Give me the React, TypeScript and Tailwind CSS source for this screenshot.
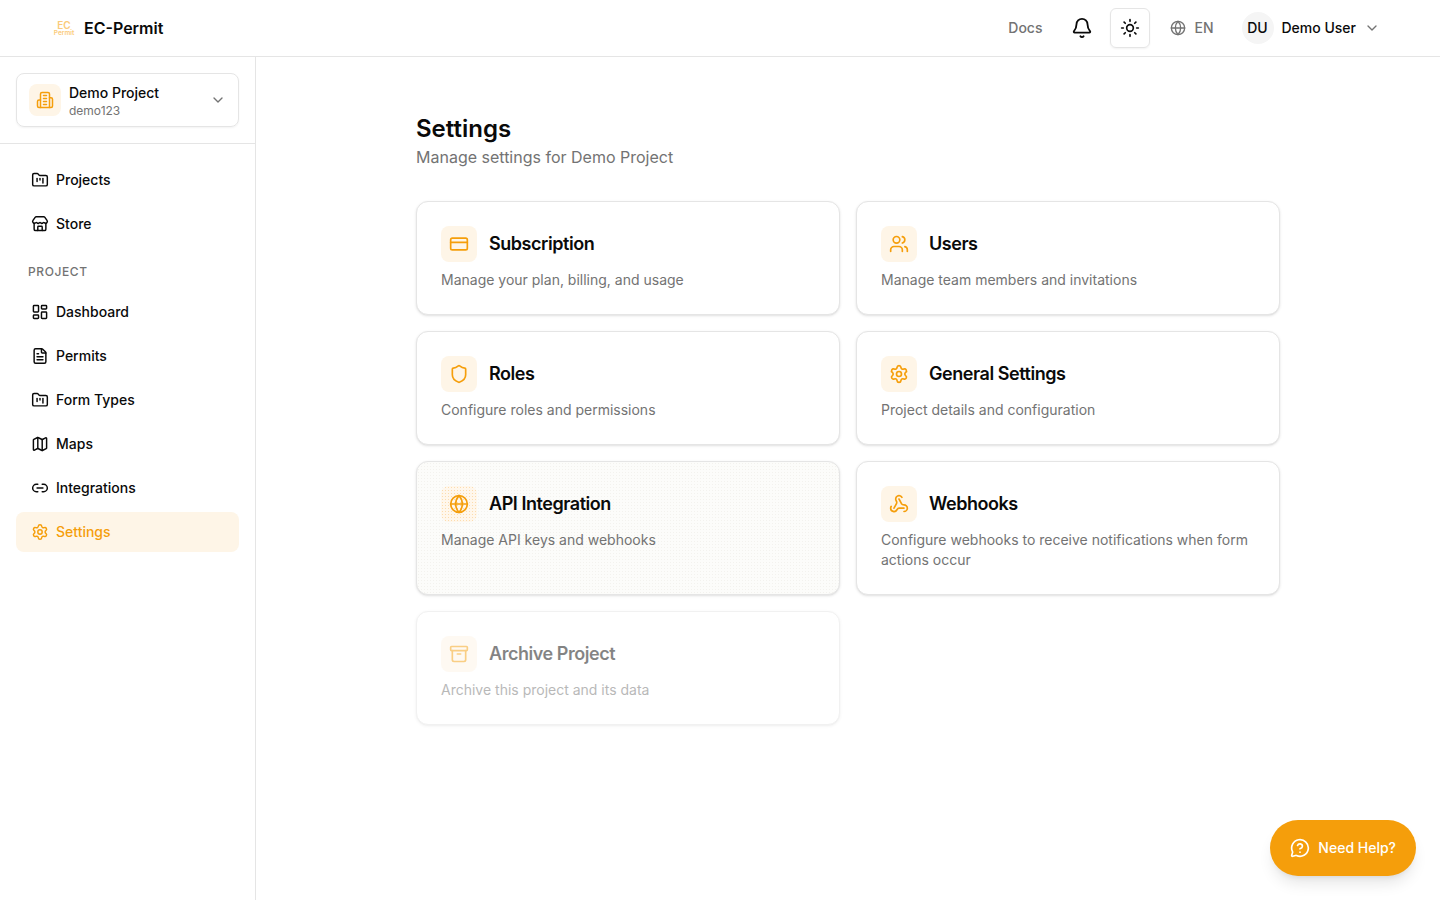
import {
  Archive,
  Bell,
  ChevronDown,
  CreditCard,
  FileText,
  FolderKanban,
  Globe,
  LayoutDashboard,
  Link2,
  Map,
  MessageCircleQuestion,
  Settings,
  Shield,
  Store,
  Sun,
  Users,
  Webhook,
} from 'lucide-react';

const topNav = [
  { label: 'Projects', icon: FolderKanban },
  { label: 'Store', icon: Store },
];

const projectNav = [
  { label: 'Dashboard', icon: LayoutDashboard },
  { label: 'Permits', icon: FileText },
  { label: 'Form Types', icon: FolderKanban },
  { label: 'Maps', icon: Map },
  { label: 'Integrations', icon: Link2 },
  { label: 'Settings', icon: Settings, active: true },
];

const cards = [
  { title: 'Subscription', text: 'Manage your plan, billing, and usage', icon: CreditCard },
  { title: 'Users', text: 'Manage team members and invitations', icon: Users },
  { title: 'Roles', text: 'Configure roles and permissions', icon: Shield },
  { title: 'General Settings', text: 'Project details and configuration', icon: Settings },
  { title: 'API Integration', text: 'Manage API keys and webhooks', icon: Globe, hovered: true },
  {
    title: 'Webhooks',
    text: 'Configure webhooks to receive notifications when form actions occur',
    icon: Webhook,
  },
  { title: 'Archive Project', text: 'Archive this project and its data', icon: Archive, disabled: true },
];

// older lucide building-2, the one in the package has a different shape
function ProjectIcon() {
  return (
    <svg
      viewBox="0 0 24 24"
      fill="none"
      stroke="currentColor"
      strokeWidth={2}
      strokeLinecap="round"
      strokeLinejoin="round"
      className="h-[18px] w-[18px]"
    >
      <path d="M6 22V4a2 2 0 0 1 2-2h8a2 2 0 0 1 2 2v18Z" />
      <path d="M6 12H4a2 2 0 0 0-2 2v6a2 2 0 0 0 2 2h2" />
      <path d="M18 9h2a2 2 0 0 1 2 2v9a2 2 0 0 1-2 2h-2" />
      <path d="M10 6h4" />
      <path d="M10 10h4" />
      <path d="M10 14h4" />
      <path d="M10 18h4" />
    </svg>
  );
}

function NavItem({ label, icon: Icon, active }: { label: string; icon: typeof Store; active?: boolean }) {
  return (
    <a
      className={`flex h-10 items-center gap-2 rounded-lg px-4 text-sm font-medium ${
        active ? 'bg-[#fef5e7] text-[#f59e0b]' : 'text-[#0a0a0a]'
      }`}
    >
      <Icon className="h-4 w-4 scale-110" />
      {label}
    </a>
  );
}

export default function App() {
  return (
    <div className="flex h-[900px] flex-col overflow-hidden bg-white font-['Inter',sans-serif] text-[#0a0a0a] antialiased">
      {/* Header */}
      <header className="flex h-[57px] shrink-0 items-center justify-between border-b border-[#e5e5e5] pl-[52px] pr-[60px]">
        <div className="flex items-center gap-2">
          <div className="flex w-6 flex-col items-center pt-px font-semibold text-[#fbcb7a]">
            <span className="text-[10px] leading-[9px]">EC</span>
            <span className="text-[6.5px] leading-[7px]">Permit</span>
          </div>
          <span className="text-base font-semibold">EC-Permit</span>
        </div>
        <div className="flex items-center">
          <span className="text-sm font-medium text-[#737373]">Docs</span>
          <Bell className="ml-[29px] h-[22px] w-[22px]" />
          <button className="ml-[17px] flex h-10 w-10 items-center justify-center rounded-md border border-[#e5e5e5] shadow-xs">
            <Sun className="h-5 w-5" />
          </button>
          <Globe className="ml-5 h-4 w-4 text-[#737373]" />
          <span className="ml-2 text-sm font-medium text-[#737373]">EN</span>
          <span className="ml-7 flex h-8 w-8 items-center justify-center rounded-full bg-[#f5f5f5] text-sm font-medium">
            DU
          </span>
          <span className="ml-2 text-sm font-medium">Demo User</span>
          <ChevronDown className="ml-2 h-4 w-4 text-[#737373]" />
        </div>
      </header>

      <div className="flex min-h-0 flex-1">
        {/* Sidebar */}
        <aside className="w-64 shrink-0 border-r border-[#e5e5e5]">
          <div className="border-b border-[#e5e5e5] p-4">
            <div className="flex h-[54px] items-center rounded-lg border border-[#e5e5e5] px-3 shadow-xs">
              <span className="flex h-8 w-8 items-center justify-center rounded-lg bg-[#fef5e7] text-[#f59e0b]">
                <ProjectIcon />
              </span>
              <div className="ml-2 flex-1 pt-0.5">
                <div className="text-sm leading-5 font-medium">Demo Project</div>
                <div className="text-xs leading-4 text-[#737373]">demo123</div>
              </div>
              <ChevronDown className="h-4 w-4 text-[#737373]" />
            </div>
          </div>
          <nav className="flex flex-col px-4 pt-4">
            <div className="flex flex-col gap-1">
              {topNav.map((item) => (
                <NavItem key={item.label} {...item} />
              ))}
            </div>
            <div className="mb-3 mt-5 px-3 text-xs leading-4 font-medium tracking-wider text-[#737373]">PROJECT</div>
            <div className="flex flex-col gap-1">
              {projectNav.map((item) => (
                <NavItem key={item.label} {...item} />
              ))}
            </div>
          </nav>
        </aside>

        {/* Main */}
        <main className="relative flex-1 pt-14">
          <div className="mx-auto w-[864px]">
            <h1 className="text-2xl font-semibold">Settings</h1>
            <p className="mb-8 text-base text-[#737373]">Manage settings for Demo Project</p>
            <div className="grid grid-cols-2 gap-4">
              {cards.map((card) => {
                const Icon = card.icon;
                return (
                  <div
                    key={card.title}
                    className={`rounded-xl border border-[#e5e5e5] p-6 shadow-sm ${
                      card.hovered
                        ? 'bg-[#fcfcfa] bg-[radial-gradient(#f3f2ee_0.7px,transparent_0.7px)] bg-[size:3px_3px]'
                        : 'bg-white'
                    } ${card.disabled ? 'opacity-50' : ''}`}
                  >
                    <div className="flex items-center gap-3">
                      <span
                        className={`flex h-9 w-9 items-center justify-center rounded-lg text-[#f59e0b] ${
                          card.hovered
                            ? 'bg-[#fff7ec] bg-[radial-gradient(#fcdcae_0.9px,transparent_0.9px)] bg-[size:3px_3px]'
                            : 'bg-[#fef5e7]'
                        }`}
                      >
                        <Icon className="h-5 w-5" />
                      </span>
                      <h3 className="text-lg font-semibold tracking-tight">{card.title}</h3>
                    </div>
                    <p className="mt-2 text-sm text-[#737373]">{card.text}</p>
                  </div>
                );
              })}
            </div>
          </div>
          <button className="absolute bottom-6 right-6 flex h-14 items-center gap-2 rounded-full bg-[#f59e0b] px-5 text-sm font-medium text-white shadow-lg">
            <MessageCircleQuestion className="h-5 w-5" />
            Need Help?
          </button>
        </main>
      </div>
    </div>
  );
}
